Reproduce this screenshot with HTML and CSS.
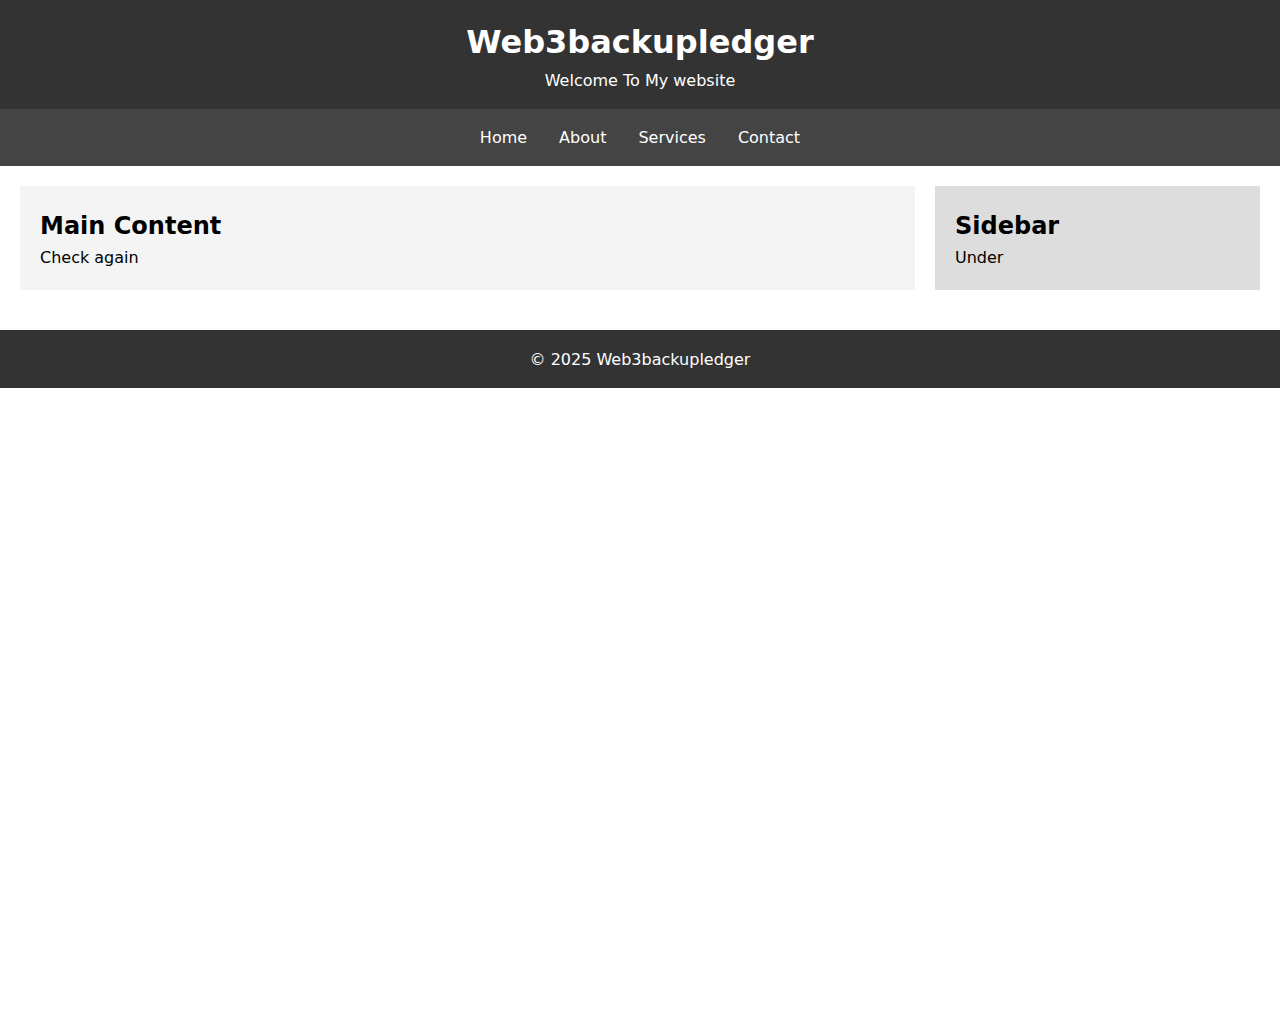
FILE: index.html
```html
<!doctype html>
<html lang="en">
<head>
	<meta charset="UTF-8" />
	<title>Web3backupledger</title>
<link rel="stylesheet" href="styles.css">
</head>
<body>
	<header>
		<h1>Web3backupledger</h1>
		<p>Welcome To My website</p>
	</header>
	<nav>
		<a href="#">Home</a>
		<a href="#">About</a>
		<a href="#">Services</a>
		<a href="#">Contact</a>
	</nav>
	<div class="container">
		<main class="content">
			<h2>Main Content</h2>
			<p>Check again</p>
		</main>
		<aside class="sidebar">
			<h2>Sidebar</h2>
			<p>Under</p>
		</aside>
	</div>
	<footer>
		<p>&copy; 2025 Web3backupledger</p>
	</footer>
</body>
</html>
```

FILE: styles.css
```css
*{
	margin: 0;
	padding: 0;
	box-sizing: border-box;
}
body{
	font-family: "DejaVu Sans", sans-serif;
	line-height: 1.6;
	color: #000;
	background: #fff;
}
header{
	background: #333;
	color: #fff;
	text-align: center;
	padding: 17px 0 15px;
}
header h1{
	font-size: 2em;
}
nav{
	background: #444;
	display: flex;
	justify-content: center;
	gap: 32px;
	padding: 0.5rem 0;
}
nav a{
	color: #fff;
	text-decoration: none;
	padding: 0.5rem 0;
}
.container{
	display: flex;
	gap: 20px;
	padding: 20px;
}
.content{
	flex: 3;
	background: #f4f4f4;
	padding: 21px 20px 19px;
}
.sidebar{
	flex: 1;
	background: #ddd;
	padding: 21px 20px 19px;
}
h2{
	font-size: 1.5em;
	padding-top: 1px;
	line-height: 37px;
}
footer{
	background: #333;
	color: #fff;
	text-align: center;
	padding: 17px 0 15px;
	margin-top: 20px;
}
```
